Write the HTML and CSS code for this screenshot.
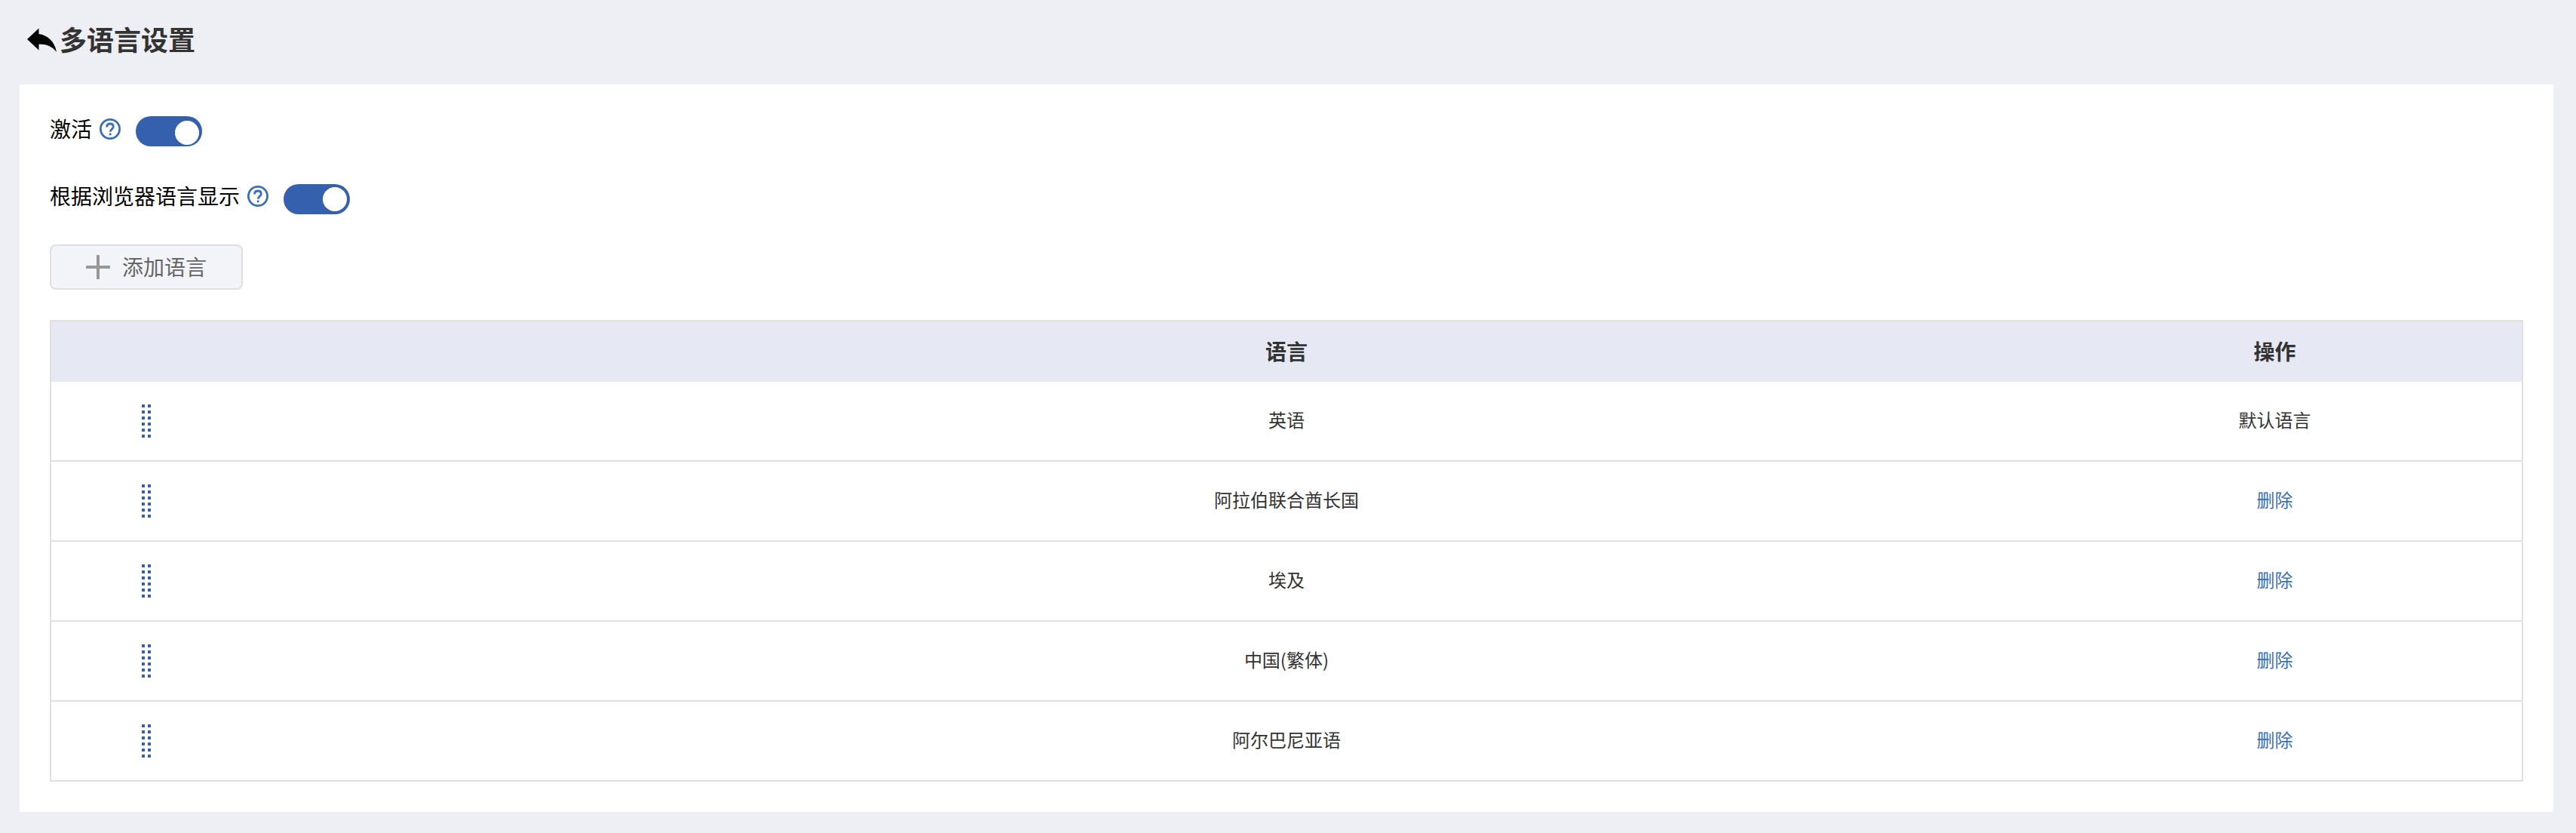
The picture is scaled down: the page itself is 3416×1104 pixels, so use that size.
FILE: index.html
```html
<!DOCTYPE html>
<html lang="zh-CN">
	<head>
		<meta charset="utf-8">
		<title>多语言设置</title>
		<link rel="stylesheet" href="styles.css">
	</head>
	<body>
		<!-- shared icons -->
		<svg class="sprite">
			<symbol id="help" viewBox="0 0 28 28">
				<circle cx="14" cy="14" r="12.6" fill="none" stroke="#3a70b8" stroke-width="2.8" />
				<path d="M9.6 11.4C9.6 8.6 11.4 7 14 7s4.3 1.6 4.3 3.9c0 3.1-4 3.4-4 6.8" fill="none" stroke="#3a70b8" stroke-width="2.8" />
				<circle cx="14.2" cy="20.8" r="1.6" fill="#3a70b8" />
			</symbol>
			<symbol id="drag" viewBox="0 0 12 44">
				<path d="M2 0v44M10 0v44" stroke="#3660ae" stroke-width="4" stroke-dasharray="4 4" />
			</symbol>
		</svg>
		<header class="page-header">
			<svg class="back" viewBox="0 0 39 32">
				<path d="M0 15L15.5 0.5V8C26 9.5 36.5 17 39 32C33.5 24.5 26 21.5 15.5 21.5V29.5Z" />
			</svg>
			<h1>多语言设置</h1>
		</header>
		<main class="panel">
			<div class="setting">
				<span class="label">激活</span>
				<svg class="help"><use href="#help" /></svg>
				<span class="switch low"></span>
			</div>
			<div class="setting second">
				<span class="label">根据浏览器语言显示</span>
				<svg class="help"><use href="#help" /></svg>
				<span class="switch"></span>
			</div>
			<button class="add" type="button">
				<svg class="plus" viewBox="0 0 32 32"><path d="M16 0v32M0 16h32" /></svg>
				<span>添加语言</span>
			</button>
			<table class="languages">
				<thead>
					<tr><th class="side"></th><th>语言</th><th class="side">操作</th></tr>
				</thead>
				<tbody>
					<tr>
						<td class="handle"><svg class="drag"><use href="#drag" /></svg></td>
						<td>英语</td>
						<td>默认语言</td>
					</tr>
					<tr>
						<td class="handle"><svg class="drag"><use href="#drag" /></svg></td>
						<td>阿拉伯联合酋长国</td>
						<td><a class="delete">删除</a></td>
					</tr>
					<tr>
						<td class="handle"><svg class="drag"><use href="#drag" /></svg></td>
						<td>埃及</td>
						<td><a class="delete">删除</a></td>
					</tr>
					<tr>
						<td class="handle"><svg class="drag"><use href="#drag" /></svg></td>
						<td>中国(繁体)</td>
						<td><a class="delete">删除</a></td>
					</tr>
					<tr>
						<td class="handle"><svg class="drag"><use href="#drag" /></svg></td>
						<td>阿尔巴尼亚语</td>
						<td><a class="delete">删除</a></td>
					</tr>
				</tbody>
			</table>
		</main>
	</body>
</html>
```
FILE: styles.css
```css
* {
	box-sizing: border-box;
}
body {
	margin: 0;
	height: 1104px;
	overflow: hidden;
	background-color: #eeeff5;
	color: #333;
	font-family: "Noto Sans CJK SC", sans-serif;
	font-size: 24px;
}
.sprite {
	display: none;
}
.page-header {
	display: flex;
	align-items: center;
	height: 112px;
	padding: 0 0 6px 36px;
}
.page-header h1 {
	margin: 0 0 4px 4px;
	font-size: 36px;
	line-height: 52px;
}
.back {
	width: 39px;
	height: 32px;
}
.panel {
	width: 3360px;
	height: 964px;
	margin-left: 26px;
	padding: 40px;
	background-color: white;
}
.setting {
	display: flex;
	align-items: flex-start;
	height: 90px;
	color: black;
	font-size: 28px;
	line-height: 40px;
}
.setting.second {
	height: 82px;
	padding-top: 2px;
}
.help {
	width: 28px;
	height: 28px;
	margin: 5px 20px 0 10px;
}
.second .help {
	margin-top: 2px;
}
.setting .label {
	margin-top: -2px;
}
.second .label {
	margin-top: -5px;
}
.switch {
	width: 88px;
	height: 40px;
	margin-top: 2px;
	padding: 4px;
	border-radius: 20px;
	background-color: #3560ad;
}
.switch::after {
	content: "";
	display: block;
	width: 32px;
	height: 32px;
	margin-left: auto;
	border-radius: 50%;
	background-color: white;
}
.switch.low {
	padding-top: 6px;
}
.second .switch {
	margin-top: 0;
}
.add {
	display: flex;
	align-items: center;
	gap: 16px;
	width: 256px;
	height: 60px;
	margin: 0;
	padding: 0 0 0 46px;
	border: 2px solid #dfdfdf;
	border-radius: 8px;
	background-color: #f2f4f9;
	color: #666;
	font-family: inherit;
	font-size: 28px;
	line-height: 40px;
}
.add span {
	margin-bottom: 2px;
}
.plus {
	width: 32px;
	height: 32px;
	fill: none;
	stroke: #979797;
	stroke-width: 4;
}
.languages {
	width: 100%;
	margin-top: 40px;
	border: 2px solid #e0e0e0;
	border-spacing: 0;
	table-layout: fixed;
}
.languages th {
	height: 80px;
	padding: 0 0 3px;
	background-color: #e6e8f4;
	font-size: 28px;
	line-height: 40px;
}
.languages .side {
	width: 20%;
}
.languages td {
	height: 106px;
	padding: 0 0 4px;
	border-bottom: 2px solid #e0e0e0;
	line-height: 36px;
	text-align: center;
}
.languages tr:last-child td {
	height: 104px;
	border-bottom: none;
}
.languages td.handle {
	padding: 0 0 0 120px;
	text-align: left;
}
.drag {
	display: block;
	width: 12px;
	height: 44px;
}
.delete {
	color: #3a70b8;
}
```
